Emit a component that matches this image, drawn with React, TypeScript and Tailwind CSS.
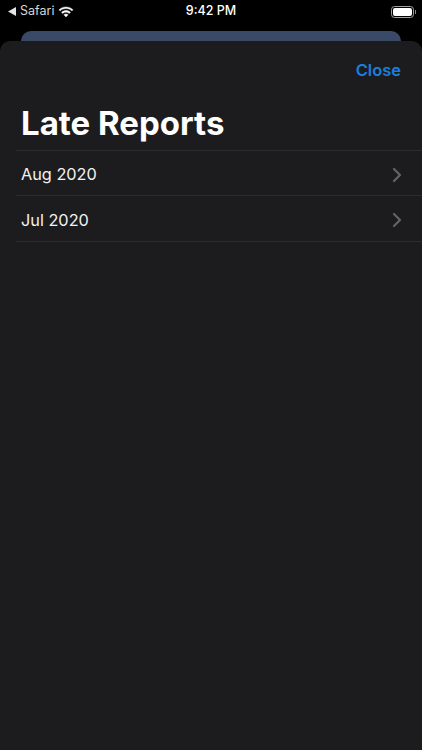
import { ChevronRight } from 'lucide-react';

const months = ['Aug 2020', 'Jul 2020'];

const WifiIcon = () => (
  <svg width="16" height="12" viewBox="0 0 17 12" fill="white" stroke="white" strokeWidth="0.4">
    <path d="M8.5 2.4c2.4 0 4.6.9 6.3 2.5l1.2-1.3C14 1.7 11.3.6 8.5.6S3 1.7 1 3.6l1.2 1.3C3.9 3.3 6.1 2.4 8.5 2.4z" />
    <path d="M8.5 6.2c1.3 0 2.6.5 3.6 1.4l1.2-1.3c-1.3-1.2-3-1.9-4.8-1.9s-3.5.7-4.8 1.9l1.2 1.3c1-.9 2.3-1.4 3.6-1.4z" />
    <path d="M8.5 8c-.9 0-1.7.3-2.3.9l2.3 2.5 2.3-2.5C10.2 8.3 9.4 8 8.5 8z" />
  </svg>
);

const StatusBar = () => (
  <div className="h-[31px] pb-[8px] grid grid-cols-3 items-center px-[7px] text-white text-[12.5px] font-['Inter',sans-serif]">
    <div className="flex items-center gap-[4px] text-[#d8d8d8]">
      <svg width="8" height="9" viewBox="0 0 8 9" fill="#e5e5e5" className="ml-[1px]">
        <path d="M0 4.5 8 0v9z" />
      </svg>
      <span>Safari</span>
      <WifiIcon />
    </div>
    <div className="text-center font-medium">9:42 PM</div>
    <div className="flex justify-end items-center gap-[1px] -mr-[1px]">
      <div className="w-[23px] h-[12px] rounded-[3.5px] border border-[#a0a0a0] p-[1px]">
        <div className="w-full h-full bg-white rounded-[2px]" />
      </div>
      <div className="w-[1px] h-[4px] bg-[#8a8a8a]" />
    </div>
  </div>
);

export default function App() {
  return (
    <div className="w-[422px] h-[750px] bg-black flex flex-col overflow-hidden font-['Inter',sans-serif]">
      <StatusBar />
      <div className="mx-[21px] h-[10px] bg-[#3a4a66] rounded-t-[10px]" />
      <div className="flex-1 bg-[#1c1c1e] rounded-t-[10px]">
        <div className="flex justify-end pt-[18px] pr-[21px]">
          <span className="text-[#1a7fdc] text-[16.5px] font-semibold leading-[22px]">Close</span>
        </div>
        <h1 className="mt-[22px] pl-[21px] text-white text-[33px] font-bold leading-[40px]">Late Reports</h1>
        <div className="ml-4 mt-[7px] border-t border-[#2c2c2e]">
          {months.map((month) => (
            <div key={month} className="h-[45px] last:h-[46px] pt-[3px] flex items-center justify-between pl-[5px] pr-[13px] border-b border-[#2c2c2e]">
              <span className="text-[#f2f2f2] text-[16.3px]">{month}</span>
              <ChevronRight size={24} strokeWidth={2.25} className="text-[#636366]" />
            </div>
          ))}
        </div>
      </div>
    </div>
  );
}
